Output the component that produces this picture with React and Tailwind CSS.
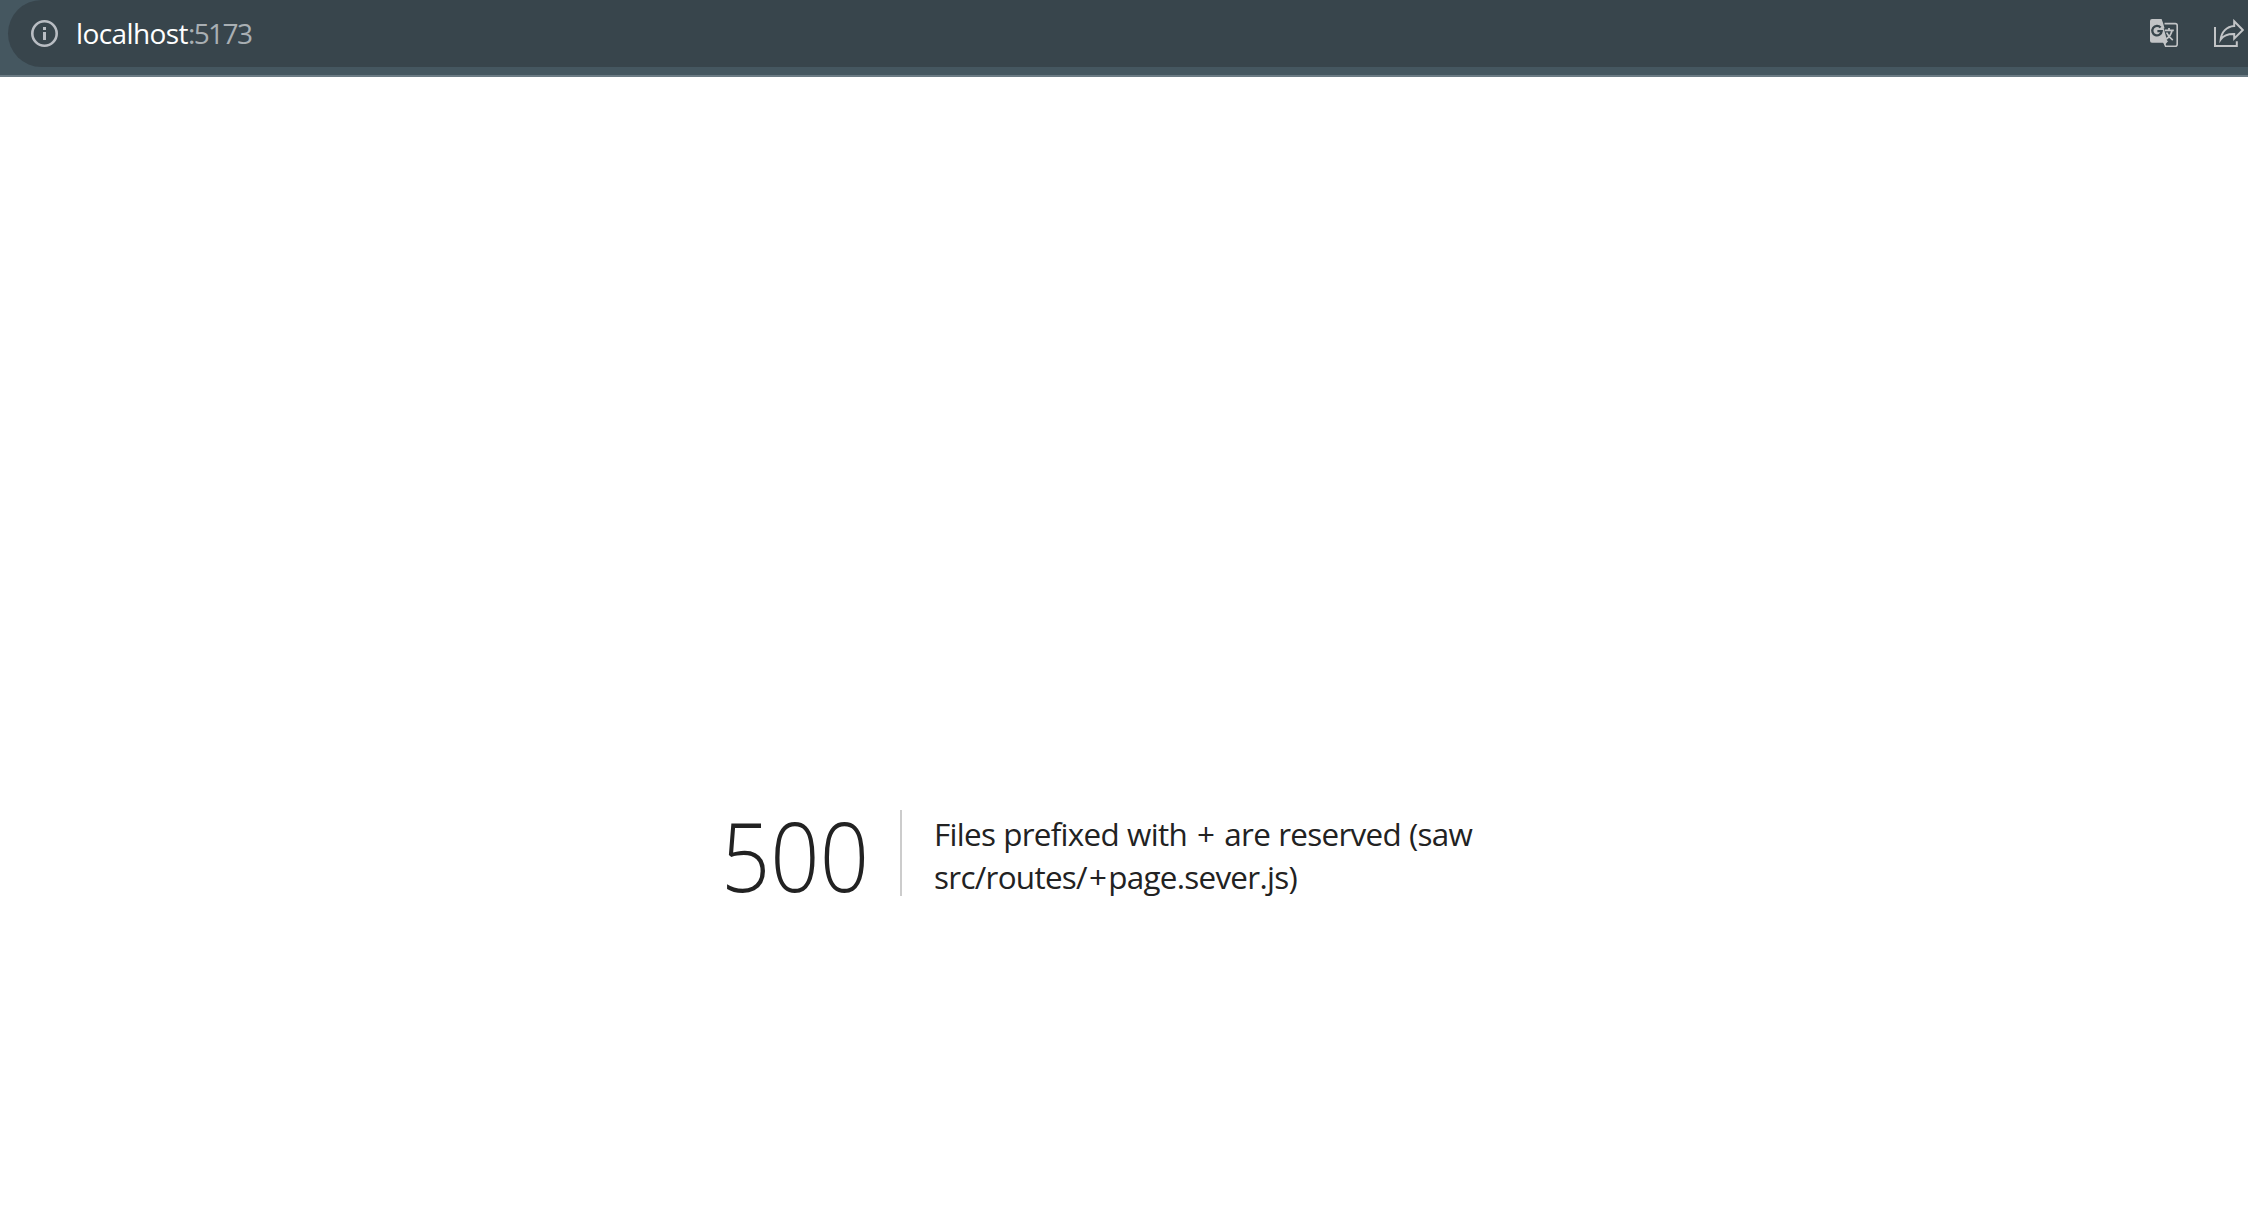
function InfoIcon() {
  return (
    <svg className="block h-[27px] w-[27px] shrink-0" viewBox="0 0 27 27" fill="none">
      <circle cx="13.5" cy="13.5" r="12.2" stroke="#b9bdc3" strokeWidth="2.6" />
      <path d="M12 7h3v3h-3zM12 12h3v8h-3z" fill="#b9bdc3" />
    </svg>
  );
}

function TranslateIcon() {
  return (
    <svg className="block h-7 w-7 shrink-0" viewBox="0 0 28 28" fill="none">
      <path d="M14.5 4.6h10.7a2 2 0 0 1 2 2v18.600a2 2 0 0 1-2 2H15.600L13.600 22" stroke="#c2c4c6" strokeWidth="1.6" />
      <path d="M2 0h9.600l1.500 4.300L18.200 22l-3.600 4.200L13.400 23.700H2a2 2 0 0 1-2-2V2a2 2 0 0 1 2-2z" fill="#c2c4c6" />
      <path d="M10.600 8.600a4.700 4.700 0 1 0 1.100 3.500H7.400" stroke="#38454c" strokeWidth="2.300" />
      <path d="M13.700 9.200h2.200l3.200 11.200-1.800 1.900z" fill="#38454c" />
      <path d="M14.800 11.400h9M19 9v2.400M22 11.600c-.8 3.700-3 6.600-5.700 8.500M16.600 13.500c1.300 3.200 3.500 5.600 6.200 7.600" stroke="#c2c4c6" strokeWidth="1.800" />
    </svg>
  );
}

function ShareIcon() {
  return (
    <svg className="block h-7 w-[30px] shrink-0" viewBox="0 0 30 28" fill="none" stroke="#c2c4c6" strokeWidth="2">
      <path d="M1 8v19h21.800V22.300" />
      <path d="M20.200 2.300 28.800 11 20.200 19.600V15C14 14.800 9.500 16.600 6.700 20.500 7.500 13 12.500 7.500 20.200 7z" />
    </svg>
  );
}

export default function App() {
  return (
    <div className="flex h-[1216px] w-[2248px] flex-col overflow-hidden bg-white">
      <header className="h-[77px] shrink-0 border-b-2 border-[#6b7b84] bg-[#455760] pl-2">
        <div className="flex h-[67px] items-center rounded-l-[34px] bg-[#38454c] pr-1 pb-px pl-[23px]">
          <InfoIcon />
          <div className="ml-[18px] flex pb-px font-['Open_Sans',sans-serif] text-[28px] leading-[36px] whitespace-nowrap text-white">
            <span className="tracking-[-0.6px]">localhost</span>
            <span className="tracking-[-1.6px] text-[#a9afb3]">:5173</span>
          </div>
          <div className="ml-auto flex items-center gap-9">
            <TranslateIcon />
            <ShareIcon />
          </div>
        </div>
      </header>
      <main className="flex flex-1 items-start pt-[733px] pl-[721px] font-['Open_Sans',sans-serif] text-[#222]">
        <h1 className="w-[179px] shrink-0 pt-0.5 text-[96px] leading-[86px] font-light">
          <span className="inline-block origin-left scale-x-[0.9]">500</span>
        </h1>
        <div className="h-[86px] border-l-2 border-[#ccc] pt-0.5 pl-8">
          <p className="text-[31.4px] leading-[43px] tracking-[-0.7px] whitespace-nowrap [word-spacing:0.6px]">
            Files prefixed with <span className="mx-0.5">+</span> are reserved (saw
            <br />
            src/routes/<span className="mx-0.5">+</span>page.sever.js)
          </p>
        </div>
      </main>
    </div>
  );
}
